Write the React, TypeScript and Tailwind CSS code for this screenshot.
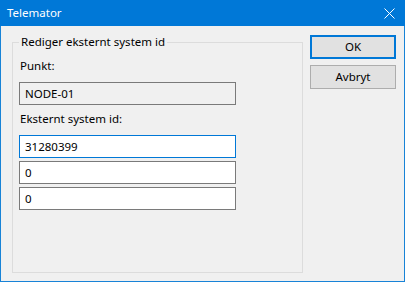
import React from "react";

const font = { fontFamily: '"Noto Sans", "Open Sans", Arial, sans-serif' };

export default function App() {
  return (
    <div
      className="w-[405px] h-[282px] bg-[#f0f0f0] border border-t-0 border-[#1883d7] flex flex-col text-[11.5px] leading-[16px] text-black"
      style={font}
    >
      <div className="h-[26px] bg-[#0078d7] flex items-center justify-between -mx-px px-[7px] shrink-0">
        <span className="text-white text-[11.5px]">Telemator</span>
        <svg width="11" height="11" viewBox="0 0 11 11" className="mr-[3px]">
          <path d="M0.5 0.5 L10.5 10.5 M10.5 0.5 L0.5 10.5" stroke="white" strokeWidth="1" />
        </svg>
      </div>
      <div className="flex flex-row items-start">
        <fieldset className="ml-[11px] mt-[8px] w-[291px] h-[239px] border border-[#dcdcdc] pl-[6px] flex flex-col">
          <legend className="px-[2px] leading-[16px]">Rediger eksternt system id</legend>
          <div className="mt-[8px] pl-px">Punkt:</div>
          <div className="mt-[8px] w-[217px] h-[23px] border border-[#7a7a7a] bg-[#f0f0f0] flex items-center pl-[5px]">
            NODE-01
          </div>
          <div className="mt-[6px] pl-px">Eksternt system id:</div>
          <div className="mt-[8px] flex flex-col gap-[3px]">
            <div className="w-[217px] h-[23px] border border-[#0078d7] bg-white flex items-center pl-[5px]">
              31280399
            </div>
            <div className="w-[217px] h-[23px] border border-[#7a7a7a] bg-white flex items-center pl-[5px]">
              0
            </div>
            <div className="w-[217px] h-[23px] border border-[#7a7a7a] bg-white flex items-center pl-[5px]">
              0
            </div>
          </div>
        </fieldset>
        <div className="ml-[7px] mt-[9px] flex flex-col gap-[6px]">
          <button className="w-[86px] h-[24px] border-2 border-[#0078d7] bg-[#e1e1e1] flex items-center justify-center">
            OK
          </button>
          <button className="w-[86px] h-[24px] border border-[#adadad] bg-[#e1e1e1] flex items-center justify-center">
            Avbryt
          </button>
        </div>
      </div>
    </div>
  );
}
